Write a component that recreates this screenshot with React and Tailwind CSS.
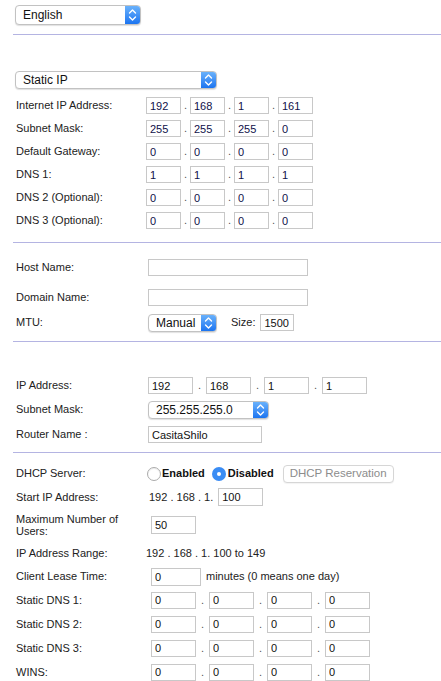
import React from "react";

const Divider = ({ className = "" }) => (
  <div className={`h-px bg-[#b4b4e2] ${className}`} />
);

const Stepper = () => (
  <svg width="9" height="14" viewBox="0 0 9 14" fill="none" stroke="white" strokeWidth="1.4" strokeLinecap="round" strokeLinejoin="round">
    <path d="M1.5 5 L4.5 2 L7.5 5" />
    <path d="M1.5 9 L4.5 12 L7.5 9" />
  </svg>
);

const Select = ({ value, className = "" }) => (
  <div className={`flex overflow-hidden rounded-[4px] border border-[#c2c2c2] bg-white shadow-[0_1px_1px_rgba(0,0,0,0.12)] ${className}`}>
    <div className="flex flex-1 items-center pl-[7px] text-[12px] text-[#111]">{value}</div>
    <div className="flex w-[15px] items-center justify-center bg-linear-to-b from-[#69b1fb] to-[#1a74f0]">
      <Stepper />
    </div>
  </div>
);

const Field = ({ value = "", className = "" }) => (
  <input
    readOnly
    value={value}
    className={`h-[17px] border border-[#c8c8c8] bg-white px-[3px] text-[11px] text-[#111] outline-none ${className}`}
  />
);

const Row = ({ label, labelClass = "w-[133px]", className = "h-[23px]", children }) => (
  <div className={`flex items-center ${className}`}>
    <div className={`shrink-0 pl-[3px] ${labelClass}`}>{label}</div>
    {children}
  </div>
);

// four octet boxes with dots between
const Quad = ({ values, inputClass, dotClass, last = "" }) => (
  <div className="flex items-center">
    {values.map((v, i) => (
      <React.Fragment key={i}>
        {i > 0 && <span className={`text-center text-[#555] ${dotClass}`}>.</span>}
        <Field value={v} className={i === 3 && last ? last : inputClass} />
      </React.Fragment>
    ))}
  </div>
);

const wan = [
  ["Internet IP Address:", ["192", "168", "1", "161"]],
  ["Subnet Mask:", ["255", "255", "255", "0"]],
  ["Default Gateway:", ["0", "0", "0", "0"]],
  ["DNS 1:", ["1", "1", "1", "1"]],
  ["DNS 2 (Optional):", ["0", "0", "0", "0"]],
  ["DNS 3 (Optional):", ["0", "0", "0", "0"]],
];

const staticDns = ["Static DNS 1:", "Static DNS 2:", "Static DNS 3:", "WINS:"];

export default function App() {
  return (
    <div className="h-[681px] overflow-hidden bg-white pl-[13px] font-['Liberation_Sans',Arial,sans-serif] text-[11px] text-[#222]">
      {/* Language */}
      <div className="pl-[2px] pt-[5px]">
        <Select value="English" className="h-[20px] w-[126px]" />
      </div>
      <Divider className="mt-[9px]" />

      {/* Internet setup */}
      <div className="mt-[36px] pl-[2px]">
        <Select value="Static IP" className="h-[18px] w-[202px]" />
      </div>
      <div className="mt-[5px]">
        {wan.map(([label, vals]) => (
          <Row key={label} label={label}>
            <Quad values={vals} inputClass="w-[35px] text-[#10104a]" dotClass="w-[9px]" />
          </Row>
        ))}
      </div>
      <Divider className="mt-[10px]" />

      {/* Optional settings */}
      <Row label="Host Name:" labelClass="w-[135px]" className="mt-[13px] h-[23px]">
        <Field className="w-[160px]" />
      </Row>
      <Row label="Domain Name:" labelClass="w-[135px]" className="mt-[7px] h-[23px]">
        <Field className="w-[160px]" />
      </Row>
      <Row label="MTU:" labelClass="w-[135px]" className="mt-[2px] h-[23px]">
        <Select value="Manual" className="h-[18px] w-[69px]" />
        <span className="ml-[14px] mr-[5px]">Size:</span>
        <Field value="1500" className="w-[34px]" />
      </Row>
      <Divider className="mt-[7px]" />

      {/* Router IP */}
      <Row label="IP Address:" labelClass="w-[135px]" className="mt-[32px] h-[23px]">
        <Quad values={["192", "168", "1", "1"]} inputClass="w-[45px]" dotClass="w-[13px]" />
      </Row>
      <Row label="Subnet Mask:" labelClass="w-[135px]" className="mt-px h-[23px]">
        <Select value="255.255.255.0" className="h-[18px] w-[121px]" />
      </Row>
      <Row label="Router Name :" labelClass="w-[135px]" className="mt-[2px] h-[23px]">
        <Field value="CasitaShilo" className="w-[114px]" />
      </Row>
      <Divider className="mt-[6px]" />

      {/* DHCP */}
      <Row label="DHCP Server:" labelClass="w-[134px]" className="mt-[9px] h-[23px]">
        <span className="h-[14px] w-[14px] rounded-full border border-[#ababab] bg-white shadow-[inset_0_1px_1px_rgba(0,0,0,0.08)]" />
        <span className="ml-px font-bold text-[#111]">Enabled</span>
        <span className="ml-[7px] flex h-[14px] w-[14px] items-center justify-center rounded-full bg-[#3a8cf4]">
          <span className="h-[4px] w-[4px] rounded-full bg-white" />
        </span>
        <span className="ml-[2px] font-bold text-[#111]">Disabled</span>
        <button className="ml-[9px] flex h-[18px] w-[111px] items-center justify-center rounded-[4px] border border-[#d6d6d6] bg-white text-[11.5px] text-[#8c8c8c] shadow-[0_1px_1px_rgba(0,0,0,0.05)]">
          DHCP Reservation
        </button>
      </Row>
      <Row label="Start IP Address:" labelClass="w-[136px]" className="h-[24px]">
        <span className="mr-[5px]">192 . 168 . 1.</span>
        <Field value="100" className="h-[18px] w-[45px]" />
      </Row>
      <Row
        label={<span className="block leading-[12px]">Maximum Number of<br />Users:</span>}
        labelClass="w-[138px]"
        className="mt-[1px] h-[30px]"
      >
        <Field value="50" className="h-[18px] w-[45px]" />
      </Row>
      <Row label="IP Address Range:" labelClass="w-[133px]" className="mt-[2px] h-[23px]">
        <span>192 . 168 . 1. 100 to 149</span>
      </Row>
      <Row label="Client Lease Time:" labelClass="w-[138px]" className="h-[23px]">
        <Field value="0" className="h-[18px] w-[50px]" />
        <span className="ml-[5px]">minutes (0 means one day)</span>
      </Row>
      {staticDns.map((label) => (
        <Row key={label} label={label} labelClass="w-[138px]" className="h-[24px]">
          <Quad values={["0", "0", "0", "0"]} inputClass="w-[45px]" dotClass="w-[13px]" />
        </Row>
      ))}
    </div>
  );
}
